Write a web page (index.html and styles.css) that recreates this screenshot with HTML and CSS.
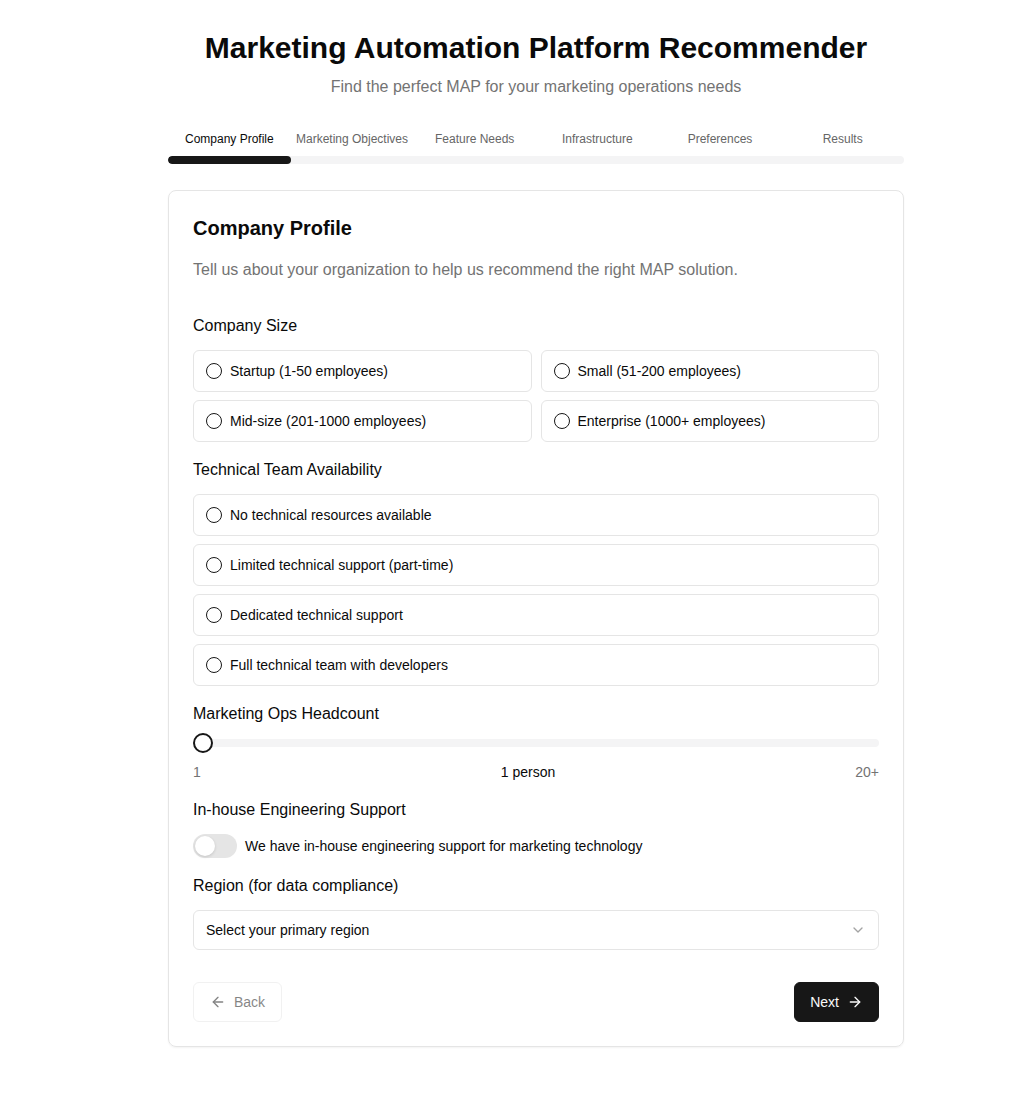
FILE: index.html
```html
<!DOCTYPE html>
<html lang="en">
<head>
<meta charset="utf-8">
<title>Marketing Automation Platform Recommender</title>
<link rel="stylesheet" href="styles.css">
</head>
<body>
<main class="page">
  <header class="hero">
    <h1 class="hero-title">Marketing Automation Platform Recommender</h1>
    <p class="hero-sub">Find the perfect MAP for your marketing operations needs</p>
  </header>

  <nav class="steps">
    <div class="step-labels">
      <span class="step active">Company Profile</span>
      <span class="step">Marketing Objectives</span>
      <span class="step">Feature Needs</span>
      <span class="step">Infrastructure</span>
      <span class="step">Preferences</span>
      <span class="step">Results</span>
    </div>
    <div class="progress"><div class="progress-fill" style="width: 16.667%"></div></div>
  </nav>

  <section class="card">
    <h2 class="card-title">Company Profile</h2>
    <p class="card-desc">Tell us about your organization to help us recommend the right MAP solution.</p>

    <div class="field">
      <div class="field-label">Company Size</div>
      <div class="grid-2">
        <label class="option"><span class="radio"></span>Startup (1-50 employees)</label>
        <label class="option"><span class="radio"></span>Small (51-200 employees)</label>
        <label class="option"><span class="radio"></span>Mid-size (201-1000 employees)</label>
        <label class="option"><span class="radio"></span>Enterprise (1000+ employees)</label>
      </div>
    </div>

    <div class="field">
      <div class="field-label">Technical Team Availability</div>
      <div class="stack">
        <label class="option"><span class="radio"></span>No technical resources available</label>
        <label class="option"><span class="radio"></span>Limited technical support (part-time)</label>
        <label class="option"><span class="radio"></span>Dedicated technical support</label>
        <label class="option"><span class="radio"></span>Full technical team with developers</label>
      </div>
    </div>

    <div class="field field-slider">
      <div class="field-label">Marketing Ops Headcount</div>
      <div class="slider">
        <div class="slider-track"></div>
        <div class="slider-thumb"></div>
      </div>
      <div class="slider-labels">
        <span class="muted">1</span>
        <span class="current">1 person</span>
        <span class="muted">20+</span>
      </div>
    </div>

    <div class="field">
      <div class="field-label">In-house Engineering Support</div>
      <div class="switch-row">
        <span class="switch"><span class="switch-knob"></span></span>
        <span class="switch-text">We have in-house engineering support for marketing technology</span>
      </div>
    </div>

    <div class="field">
      <div class="field-label">Region (for data compliance)</div>
      <div class="select">
        <span>Select your primary region</span>
        <svg class="chev" width="16" height="16" viewBox="0 0 24 24" fill="none" stroke="currentColor" stroke-width="2" stroke-linecap="round" stroke-linejoin="round"><path d="m6 9 6 6 6-6"/></svg>
      </div>
    </div>

    <div class="actions">
      <button class="btn btn-back" disabled>
        <svg width="16" height="16" viewBox="0 0 24 24" fill="none" stroke="currentColor" stroke-width="2" stroke-linecap="round" stroke-linejoin="round"><path d="m12 19-7-7 7-7"/><path d="M19 12H5"/></svg>
        Back
      </button>
      <button class="btn btn-next">
        Next
        <svg width="16" height="16" viewBox="0 0 24 24" fill="none" stroke="currentColor" stroke-width="2" stroke-linecap="round" stroke-linejoin="round"><path d="M5 12h14"/><path d="m12 5 7 7-7 7"/></svg>
      </button>
    </div>
  </section>
</main>
</body>
</html>
```

FILE: styles.css
```css
* { box-sizing: border-box; }
html, body { margin: 0; padding: 0; background: #fff; }
body {
  font-family: "Liberation Sans", Arial, Helvetica, sans-serif;
  color: #0a0a0a;
}
.page {
  width: 736px;
  margin: 0 0 0 168px;
  padding: 30px 0 48px;
}
.hero { text-align: center; }
.hero-title {
  margin: 0;
  font-size: 30px;
  line-height: 36px;
  font-weight: 700;
}
.hero-sub {
  margin: 9px 0 0;
  font-size: 16px;
  line-height: 24px;
  color: #737373;
}
.steps { margin-top: 32px; }
.step-labels {
  display: grid;
  grid-template-columns: repeat(6, 1fr);
  text-align: center;
  font-size: 12px;
  line-height: 16px;
}
.step { color: #666; }
.step.active { color: #0a0a0a; }
.progress {
  margin-top: 9px;
  height: 8px;
  border-radius: 4px;
  background: #f4f4f5;
  overflow: hidden;
}
.progress-fill {
  height: 100%;
  background: #171717;
  border-radius: 4px;
}
.card {
  margin-top: 26px;
  border: 1px solid #e5e5e5;
  border-radius: 8px;
  padding: 23px 24px 24px;
  box-shadow: 0 1px 2px rgba(0,0,0,0.05);
}
.card-title {
  margin: 0;
  font-size: 20px;
  line-height: 28px;
  font-weight: 700;
}
.card-desc {
  margin: 16px 0 0;
  font-size: 16px;
  line-height: 24px;
  color: #737373;
}
.field { margin-top: 16px; }
.card-desc + .field { margin-top: 32px; }
.field-slider + .field { margin-top: 15px; }
.field-label {
  font-size: 16px;
  line-height: 24px;
  margin-bottom: 12px;
}
.grid-2 {
  display: grid;
  grid-template-columns: 1fr 1fr;
  gap: 8px 9px;
}
.stack {
  display: flex;
  flex-direction: column;
  gap: 8px;
}
.option {
  display: flex;
  align-items: center;
  gap: 8px;
  height: 42px;
  padding: 0 12px;
  border: 1px solid #e5e5e5;
  border-radius: 6px;
  font-size: 14px;
  line-height: 20px;
}
.radio {
  width: 16px;
  height: 16px;
  border: 1px solid #171717;
  border-radius: 50%;
  flex: none;
}
.field-label + .slider { margin-top: -5px; }
.slider {
  position: relative;
  height: 20px;
  display: flex;
  align-items: center;
}
.slider-track {
  width: 100%;
  height: 8px;
  border-radius: 4px;
  background: #f4f4f5;
}
.slider-thumb {
  position: absolute;
  left: 0;
  top: 0;
  width: 20px;
  height: 20px;
  border-radius: 50%;
  border: 2px solid #171717;
  background: #fff;
}
.slider-labels {
  display: flex;
  justify-content: space-between;
  margin-top: 9px;
  font-size: 14px;
  line-height: 20px;
}
.muted { color: #737373; }
.current { color: #0a0a0a; }
.field-slider + .field { margin-top: 16px; }
.switch-row {
  display: flex;
  align-items: center;
  gap: 8px;
  font-size: 14px;
  line-height: 20px;
}
.switch {
  width: 44px;
  height: 24px;
  border-radius: 12px;
  background: #e5e5e5;
  padding: 2px;
  flex: none;
  display: flex;
}
.switch-knob {
  width: 20px;
  height: 20px;
  border-radius: 50%;
  background: #fff;
  box-shadow: 0 1px 3px rgba(0,0,0,0.15);
}
.select {
  display: flex;
  align-items: center;
  justify-content: space-between;
  height: 40px;
  padding: 0 12px;
  border: 1px solid #e5e5e5;
  border-radius: 6px;
  font-size: 14px;
  line-height: 20px;
}
.field-label + .select { margin-top: 1px; }
.chev { color: #a3a3a3; width: 16px; height: 16px; }
.actions {
  display: flex;
  justify-content: space-between;
  margin-top: 32px;
}
.btn {
  display: inline-flex;
  align-items: center;
  gap: 8px;
  height: 40px;
  padding: 0 16px;
  border-radius: 6px;
  font-family: inherit;
  font-size: 14px;
  font-weight: 500;
  cursor: pointer;
}
.btn svg { width: 16px; height: 16px; }
.btn-back {
  background: #fff;
  border: 1px solid #e5e5e5;
  color: #0a0a0a;
  opacity: 0.5;
}
.btn-next {
  background: #171717;
  border: 1px solid #171717;
  color: #fafafa;
  padding: 0 15px;
}
```
